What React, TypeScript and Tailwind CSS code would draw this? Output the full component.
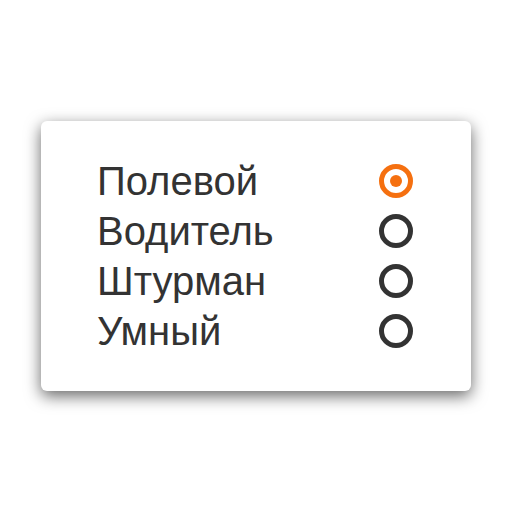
import React from "react";

const items = ["Полевой", "Водитель", "Штурман", "Умный"];

export default function App() {
  return (
    <div className="w-[512px] h-[512px] bg-white flex items-center justify-center" style={{ fontFamily: '"Liberation Sans", Arial, sans-serif' }}>
      <div className="w-[430px] h-[270px] bg-white rounded-[6px] shadow-[0_5px_16px_rgba(0,0,0,0.6)] pl-[56px] pr-[58px] py-[35px] flex flex-col">
        {items.map((t, i) => (
          <div key={t} className="h-[50px] flex items-center justify-between">
            <span className="text-[40px] leading-[50px] text-[#333333]">{t}</span>
            {i === 0 ? (
              <span className="w-[34px] h-[34px] rounded-full border-[5px] border-[#f57010] flex items-center justify-center">
                <span className="w-[12px] h-[12px] rounded-full bg-[#f57010]" />
              </span>
            ) : (
              <span className="w-[34px] h-[34px] rounded-full border-[5px] border-[#333333]" />
            )}
          </div>
        ))}
      </div>
    </div>
  );
}
